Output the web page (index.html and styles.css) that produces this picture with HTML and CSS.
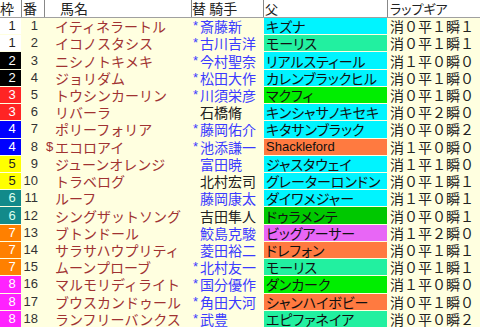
FILE: index.html
```html
<!DOCTYPE html>
<html lang="ja">
<head>
<meta charset="utf-8">
<link rel="stylesheet" href="styles.css">
</head>
<body>
<div class="table">
  <div class="head">
    <div class="h h-waku">枠</div>
    <div class="h h-ban">番</div>
    <div class="h h-name">馬名</div>
    <div class="h h-jockey">替 騎手</div>
    <div class="h h-sire">父</div>
    <div class="h h-lap">ラップギア</div>
  </div>
  <div class="rows">
    <div class="row"><div class="waku w1">1</div><div class="ban">1</div><div class="mark"></div><div class="name">イティネラートル</div><div class="chg">*</div><div class="jockey blue">斎藤新</div><div class="sire"><span class="sc cyan">キズナ</span></div><div class="lap">消０平１瞬１</div></div>
    <div class="row"><div class="waku w1">1</div><div class="ban">2</div><div class="mark"></div><div class="name">イコノスタシス</div><div class="chg">*</div><div class="jockey blue">古川吉洋</div><div class="sire"><span class="sc mint">モーリス</span></div><div class="lap">消０平１瞬１</div></div>
    <div class="row"><div class="waku w2">2</div><div class="ban">3</div><div class="mark"></div><div class="name">ニシノトキメキ</div><div class="chg">*</div><div class="jockey blue">今村聖奈</div><div class="sire"><span class="sc cyan">リアルスティール</span></div><div class="lap">消１平０瞬０</div></div>
    <div class="row"><div class="waku w2">2</div><div class="ban">4</div><div class="mark"></div><div class="name">ジョリダム</div><div class="chg">*</div><div class="jockey blue">松田大作</div><div class="sire"><span class="sc cyan">カレンブラックヒル</span></div><div class="lap">消０平１瞬０</div></div>
    <div class="row"><div class="waku w3">3</div><div class="ban">5</div><div class="mark"></div><div class="name">トウシンカーリン</div><div class="chg">*</div><div class="jockey blue">川須栄彦</div><div class="sire"><span class="sc lime">マクフィ</span></div><div class="lap">消０平１瞬０</div></div>
    <div class="row"><div class="waku w3">3</div><div class="ban">6</div><div class="mark"></div><div class="name">リバーラ</div><div class="chg"></div><div class="jockey black">石橋脩</div><div class="sire"><span class="sc cyan">キンシャサノキセキ</span></div><div class="lap">消０平２瞬０</div></div>
    <div class="row"><div class="waku w4">4</div><div class="ban">7</div><div class="mark"></div><div class="name">ポリーフォリア</div><div class="chg">*</div><div class="jockey blue">藤岡佑介</div><div class="sire"><span class="sc cyan">キタサンブラック</span></div><div class="lap">消０平０瞬２</div></div>
    <div class="row"><div class="waku w4">4</div><div class="ban">8</div><div class="mark">$</div><div class="name">エコロアイ</div><div class="chg">*</div><div class="jockey blue">池添謙一</div><div class="sire"><span class="sc orange latin">Shackleford</span></div><div class="lap">消１平０瞬０</div></div>
    <div class="row"><div class="waku w5">5</div><div class="ban">9</div><div class="mark"></div><div class="name">ジューンオレンジ</div><div class="chg"></div><div class="jockey blue">富田暁</div><div class="sire"><span class="sc cyan">ジャスタウェイ</span></div><div class="lap">消１平１瞬０</div></div>
    <div class="row"><div class="waku w5">5</div><div class="ban">10</div><div class="mark"></div><div class="name">トラベログ</div><div class="chg"></div><div class="jockey black">北村宏司</div><div class="sire"><span class="sc cyan">グレーターロンドン</span></div><div class="lap">消０平１瞬１</div></div>
    <div class="row"><div class="waku w6">6</div><div class="ban">11</div><div class="mark"></div><div class="name">ルーフ</div><div class="chg"></div><div class="jockey blue">藤岡康太</div><div class="sire"><span class="sc cyan">ダイワメジャー</span></div><div class="lap">消１平０瞬１</div></div>
    <div class="row"><div class="waku w6">6</div><div class="ban">12</div><div class="mark"></div><div class="name">シングザットソング</div><div class="chg"></div><div class="jockey black">吉田隼人</div><div class="sire"><span class="sc green">ドゥラメンテ</span></div><div class="lap">消０平０瞬１</div></div>
    <div class="row"><div class="waku w7">7</div><div class="ban">13</div><div class="mark"></div><div class="name">ブトンドール</div><div class="chg"></div><div class="jockey blue">鮫島克駿</div><div class="sire"><span class="sc violet">ビッグアーサー</span></div><div class="lap">消１平２瞬０</div></div>
    <div class="row"><div class="waku w7">7</div><div class="ban">14</div><div class="mark"></div><div class="name">サラサハウプリティ</div><div class="chg"></div><div class="jockey blue">菱田裕二</div><div class="sire"><span class="sc orange">ドレフォン</span></div><div class="lap">消０平１瞬１</div></div>
    <div class="row"><div class="waku w7">7</div><div class="ban">15</div><div class="mark"></div><div class="name">ムーンプローブ</div><div class="chg">*</div><div class="jockey blue">北村友一</div><div class="sire"><span class="sc mint">モーリス</span></div><div class="lap">消０平１瞬１</div></div>
    <div class="row"><div class="waku w8">8</div><div class="ban">16</div><div class="mark"></div><div class="name">マルモリディライト</div><div class="chg">*</div><div class="jockey blue">国分優作</div><div class="sire"><span class="sc lime">ダンカーク</span></div><div class="lap">消１平０瞬０</div></div>
    <div class="row"><div class="waku w8">8</div><div class="ban">17</div><div class="mark"></div><div class="name">ブウスカンドゥール</div><div class="chg">*</div><div class="jockey blue">角田大河</div><div class="sire"><span class="sc orange">シャンハイボビー</span></div><div class="lap">消０平１瞬０</div></div>
    <div class="row"><div class="waku w8">8</div><div class="ban">18</div><div class="mark"></div><div class="name">ランフリーバンクス</div><div class="chg">*</div><div class="jockey blue">武豊</div><div class="sire"><span class="sc mint">エピファネイア</span></div><div class="lap">消０平０瞬２</div></div>
  </div>
</div>
</body>
</html>
```

FILE: styles.css
```css
html, body {
  margin: 0;
  padding: 0;
}
body {
  width: 480px;
  height: 327px;
  overflow: hidden;
  background: #ffffe0;
  font-family: "Noto Sans CJK JP", sans-serif;
}
.table {
  display: flex;
  flex-direction: column;
  height: 327px;
}
.head {
  flex: none;
  height: 17px;
  display: grid;
  grid-template-columns: 21px 23px 147px 72px 124px 93px;
  background: #ffffff;
  border-bottom: 1px solid #a0a0a0;
  color: #222;
  font-size: 14px;
  line-height: 17px;
}
.h {
  white-space: nowrap;
}
.h + .h {
  border-left: 1px solid #888;
}
.h-ban { padding-left: 1px; }
.h-name { padding-left: 15px; }
.h-jockey { padding-left: 0; }
.h-sire { padding-left: 1px; font-size: 13px; }
.h-lap { padding-left: 2px; font-size: 13px; font-feature-settings: "palt" 1; }

.rows {
  flex: 1;
  display: flex;
  flex-direction: column;
  gap: 1px;
}
.row {
  flex: 1;
  display: grid;
  grid-template-columns: 21px 23px 11px 136px 9px 63px 124px 93px;
  font-size: 14px;
  line-height: 16px;
  white-space: nowrap;
}
.row > div {
  display: flex;
  align-items: center;
  min-width: 0;
}
.waku {
  justify-content: center;
  padding-left: 3px;
  font-family: "Liberation Sans", sans-serif;
  font-size: 13px;
  color: #fff;
}
.w1 { background: #ffffff; color: #222; }
.w2 { background: #000000; }
.w3 { background: #ff2424; }
.w4 { background: #0000ff; }
.w5 { background: #ffff00; color: #222; }
.w6 { background: #128a8a; color: #dfe; }
.w7 { background: #ff8000; }
.w8 { background: #ff22ff; }
.ban {
  justify-content: flex-end;
  padding-right: 6px;
  font-family: "Liberation Sans", sans-serif;
  font-size: 13px;
  color: #333;
}
.mark {
  padding-left: 2px;
  font-family: "Liberation Sans", sans-serif;
  font-size: 13px;
  color: #9c3030;
}
.name {
  color: #a03232;
}
.chg {
  padding-left: 2px;
  font-family: "Liberation Sans", sans-serif;
  font-size: 13px;
  color: #3b3bff;
}
.jockey.blue { color: #3b3bff; }
.jockey.black { color: #222; }
.sire {
  padding-left: 1px;
}
.sc {
  display: flex;
  align-items: center;
  width: 123px;
  height: 100%;
  padding-left: 2px;
  box-sizing: border-box;
  font-size: 14px;
  font-feature-settings: "palt" 1;
  color: #111;
}
.sc.latin {
  font-family: "Liberation Sans", sans-serif;
  font-size: 13px;
}
.cyan { background: #00f4ff; }
.mint { background: #22f0a0; }
.lime { background: #00ee00; }
.green { background: #00c800; }
.orange { background: #ff7a40; }
.violet { background: #e866f6; }
.lap {
  padding-left: 3px;
  color: #222;
}
```
